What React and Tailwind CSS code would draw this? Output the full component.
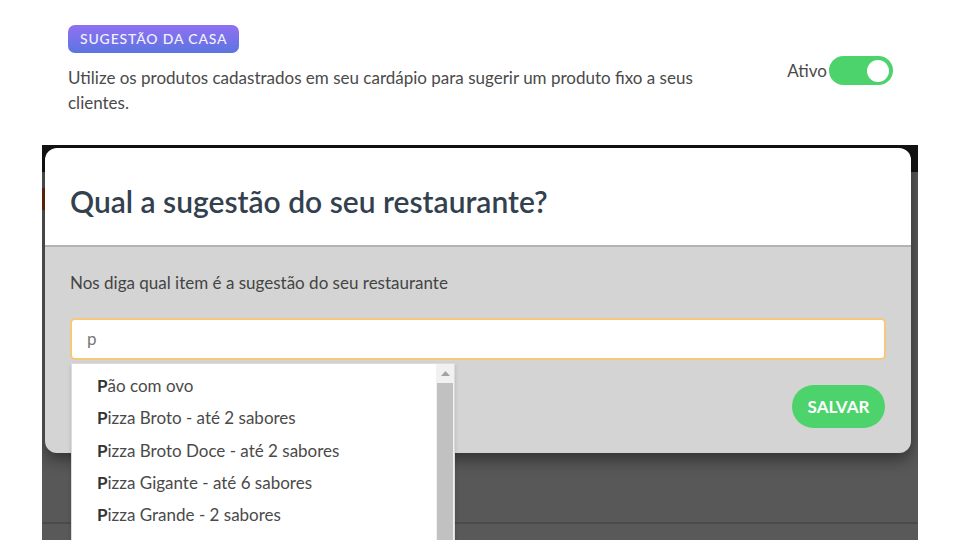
import React from 'react';

const items = [
  'ão com ovo',
  'izza Broto - até 2 sabores',
  'izza Broto Doce - até 2 sabores',
  'izza Gigante - até 6 sabores',
  'izza Grande - 2 sabores',
];

const App = () => {
  return (
    <div className="w-[960px] h-[540px] overflow-hidden bg-white font-['Lato','Open_Sans',sans-serif]">
      {/* Cabeçalho da seção */}
      <div className="h-[145px] pt-[25px] pl-[68px] pr-[67px] flex justify-between">
        <div>
          <span className="inline-flex items-center h-[28px] px-[12px] rounded-[7px] bg-gradient-to-b from-[#9070f2] to-[#5a74e0] text-[#f3f1ff] text-[14px] font-medium tracking-[0.06em] leading-none">
            SUGESTÃO DA CASA
          </span>
          <p className="mt-[12px] w-[660px] text-[17px] leading-[25px] text-[#4a4a4a]">
            Utilize os produtos cadastrados em seu cardápio para sugerir um produto fixo a seus clientes.
          </p>
        </div>
        <div className="flex items-start gap-[2px] pt-[31px]">
          <span className="text-[17px] leading-[29px] text-[#4a4a4a]">Ativo</span>
          <div className="w-[64px] h-[29px] rounded-full bg-[#4cd36b] flex items-center justify-end pr-[4px]">
            <div className="w-[22px] h-[22px] rounded-full bg-white" />
          </div>
        </div>
      </div>

      {/* Captura escura com o modal */}
      <div className="relative ml-[42px] w-[876px] h-[395px] overflow-hidden bg-[#595959]">
        <div className="h-[27px] bg-[#131313]" />
        <div className="h-[350px] bg-[#585858] pt-[16px]">
          <div className="w-[4px] h-[22px] bg-[#6b2a0c]" />
        </div>
        <div className="h-[2px] bg-[#4b4b4b]" />

        {/* Modal */}
        <div className="absolute left-[3px] top-[3px] w-[866px] rounded-[12px] shadow-[0_6px_16px_rgba(0,0,0,0.45)]">
          <div className="h-[99px] bg-white rounded-t-[12px] border-b-2 border-[#b3b3b3] pl-[25px] pt-[34px]">
            <h2 className="text-[30px] leading-[38px] font-semibold text-[#33414e]">
              Qual a sugestão do seu restaurante?
            </h2>
          </div>
          <div className="relative h-[206px] bg-[#d4d4d4] rounded-b-[12px] px-[25px] pt-[24px]">
            <p className="text-[17px] leading-[24px] text-[#444]">
              Nos diga qual item é a sugestão do seu restaurante
            </p>
            <div className="mt-[23px] h-[42px] bg-white border-2 border-[#f6c77c] rounded-[5px] flex items-center pl-[15px] text-[17px] text-[#777]">
              p
            </div>
            <div className="flex justify-end mt-[25px] pr-[1px]">
              <button className="w-[93px] h-[43px] rounded-full bg-[#4cd36b] text-white text-[17px] font-bold">
                SALVAR
              </button>
            </div>

            {/* Lista de sugestões */}
            <div className="absolute left-[26px] top-[116px] w-[384px] h-[200px] bg-white border border-[#dcdcdc] shadow-[0_2px_4px_rgba(0,0,0,0.15)] flex">
              <div className="flex-1 pt-[6px] pl-[25px]">
                {items.map((t) => (
                  <div key={t} className="h-[32.3px] leading-[32px] text-[17px] text-[#4a4a4a] whitespace-nowrap">
                    <span className="font-bold text-[#333]">P</span>{t}
                  </div>
                ))}
              </div>
              <div className="w-[18px] bg-[#f1f1f1] flex flex-col items-center">
                <div className="h-[19px] flex items-center justify-center">
                  <svg width="9" height="5" viewBox="0 0 9 5"><path d="M0 5 L4.5 0 L9 5 Z" fill="#a3a3a3" /></svg>
                </div>
                <div className="w-[16px] flex-1 bg-[#c1c1c1]" />
              </div>
            </div>
          </div>
        </div>
      </div>
    </div>
  );
};

export default App;
